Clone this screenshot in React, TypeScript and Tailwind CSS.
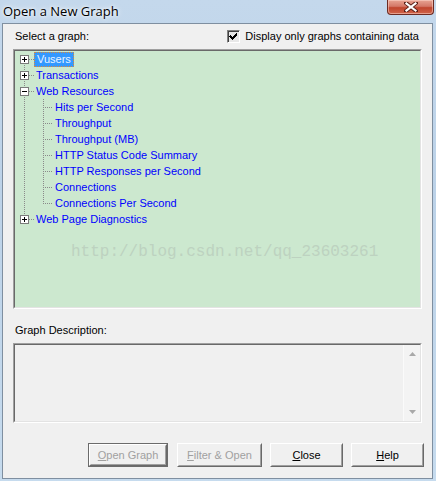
import React from "react";

type Row = { label: string; level: 0 | 1; box?: "plus" | "minus"; selected?: boolean };

const ROWS: Row[] = [
  { label: "Vusers", level: 0, box: "plus", selected: true },
  { label: "Transactions", level: 0, box: "plus" },
  { label: "Web Resources", level: 0, box: "minus" },
  { label: "Hits per Second", level: 1 },
  { label: "Throughput", level: 1 },
  { label: "Throughput (MB)", level: 1 },
  { label: "HTTP Status Code Summary", level: 1 },
  { label: "HTTP Responses per Second", level: 1 },
  { label: "Connections", level: 1 },
  { label: "Connections Per Second", level: 1 },
  { label: "Web Page Diagnostics", level: 0, box: "plus" },
];

const DOT = "#8a8a8a";

// connector lines + expander box for one tree row
function Branch({ row, first, last, lastChild }: { row: Row; first: boolean; last: boolean; lastChild: boolean }) {
  const w = row.level === 0 ? 19 : 38;
  return (
    <svg width={w} height={16} className="shrink-0" shapeRendering="crispEdges">
      {row.level === 0 ? (
        <>
          {!first && <line x1={9.5} y1={0} x2={9.5} y2={8} stroke={DOT} strokeDasharray="1 1" />}
          {!last && <line x1={9.5} y1={8} x2={9.5} y2={16} stroke={DOT} strokeDasharray="1 1" />}
          <line x1={14} y1={8.5} x2={19} y2={8.5} stroke={DOT} strokeDasharray="1 1" />
          <rect x={5.5} y={4.5} width={8} height={8} fill="#fff" stroke="#7a7a7a" />
          <line x1={7} y1={8.5} x2={12} y2={8.5} stroke="#000" />
          {row.box === "plus" && <line x1={9.5} y1={6} x2={9.5} y2={11} stroke="#000" />}
        </>
      ) : (
        <>
          <line x1={9.5} y1={0} x2={9.5} y2={16} stroke={DOT} strokeDasharray="1 1" />
          <line x1={28.5} y1={0} x2={28.5} y2={lastChild ? 9 : 16} stroke={DOT} strokeDasharray="1 1" />
          <line x1={30} y1={8.5} x2={38} y2={8.5} stroke={DOT} strokeDasharray="1 1" />
        </>
      )}
    </svg>
  );
}

function Button({ label, mn, rest, w, disabled, def }: { label?: string; mn: string; rest: string; w: string; disabled?: boolean; def?: boolean }) {
  return (
    <div
      className={`${w} h-[24px] ${def ? "border border-[#6b6b6b]" : ""}`}
    >
      <div className="h-full border border-t-white border-l-white border-r-[#696969] border-b-[#696969]">
        <div
          className={`flex h-full items-center justify-center border border-transparent border-r-[#a0a0a0] border-b-[#a0a0a0] text-[11px] ${
            disabled ? "text-[#a0a0a0]" : "text-black"
          }`}
        >
          <span className="underline underline-offset-[1px]">{mn}</span>
          <span>{rest}</span>
          {label}
        </div>
      </div>
    </div>
  );
}

export default function App() {
  const firstChild = ROWS.findIndex((r) => r.level === 1);
  let lastChildIdx = -1;
  ROWS.forEach((r, i) => {
    if (r.level === 1) lastChildIdx = i;
  });
  return (
    <div
      className="flex h-[481px] w-[436px] flex-col bg-[linear-gradient(180deg,#c4d8ec_0%,#bcd2e8_40%,#c6dbee_100%)]"
      style={{ fontFamily: '"Liberation Sans", Arial, sans-serif' }}
    >
      {/* title bar */}
      <div className="relative flex h-[23px] shrink-0 items-center">
        <span
          className="pl-[3px] text-[13px] text-black [text-shadow:0_0_6px_#ffffff,0_0_3px_#ffffff]"
          style={{ fontFamily: '"Open Sans", "Noto Sans", sans-serif' }}
        >
          Open a New Graph
        </span>
        <div className="absolute right-[2px] top-0 flex h-[15px] w-[47px] items-center justify-center rounded-b-[4px] border border-t-0 border-[#6d2b22] bg-[linear-gradient(180deg,#e8a493_0%,#d47868_45%,#c0452e_55%,#d0654a_100%)] shadow-[inset_0_0_0_1px_rgba(255,220,210,0.5)]">
          <svg width="14" height="10" viewBox="0 0 14 10">
            <path d="M2 1 L12 9 M12 1 L2 9" stroke="#5a2018" strokeWidth="4" strokeLinecap="square" />
            <path d="M2.5 1.5 L11.5 8.5 M11.5 1.5 L2.5 8.5" stroke="#ffffff" strokeWidth="2.2" strokeLinecap="square" />
          </svg>
        </div>
      </div>

      {/* client area */}
      <div className="mb-[2px] ml-[2px] mr-[3px] flex flex-1 flex-col border border-[#7f8fa0] bg-[#f0f0f0] text-[11px] text-black">
        <div className="flex h-[14px] items-center pl-[12px] pr-[13px] pt-0 mt-[5px]">
          <span>Select a graph:</span>
          <div className="ml-auto flex items-center">
            <div className="flex h-[13px] w-[13px] items-center justify-center border border-t-[#808080] border-l-[#808080] border-r-white border-b-white bg-[#e8e8e8] shadow-[inset_1px_1px_0_#404040]">
              <svg width="9" height="9" viewBox="0 0 9 9" shapeRendering="crispEdges">
                <path d="M1 3h1v1h1v1h1v-1h1v-1h1v-1h1v-1h1v3h-1v1h-1v1h-1v1h-1v1h-1v-1h-1v-1h-1v-1h-1z" fill="#000" />
              </svg>
            </div>
            <span className="ml-[5px]">Display only graphs containing data</span>
          </div>
        </div>

        {/* tree */}
        <div className="relative ml-[10px] mt-[6px] h-[260px] w-[409px] border border-t-[#a0a0a0] border-l-[#a0a0a0] border-r-white border-b-white">
          <div className="h-full border border-t-[#696969] border-l-[#696969] border-r-[#e3e3e3] border-b-[#e3e3e3] bg-[#cce8cf]">
            {ROWS.map((r, i) => (
              <div key={r.label} className="flex h-[16px] items-center">
                <Branch
                  row={r}
                  first={i === 0}
                  last={i === ROWS.length - 1}
                  lastChild={i === lastChildIdx && i >= firstChild}
                />
                <span
                  className={`flex h-[15px] items-center px-[2px] leading-none ${
                    r.selected
                      ? "border border-dotted border-[#d88a3c] bg-[#3399ff] px-[1px] text-[#eaf4ff]"
                      : "text-[#0000ff]"
                  }`}
                >
                  {r.label}
                </span>
              </div>
            ))}
          </div>
          <span
            className="pointer-events-none absolute left-[57px] top-[190px] text-[16px] text-[#bdd2c0]"
            style={{ fontFamily: '"Liberation Mono", monospace' }}
          >
            http://blog.csdn.net/qq_23603261
          </span>
        </div>

        <div className="mt-[14px] flex h-[14px] items-center pl-[12px]">Graph Description:</div>

        {/* description box */}
        <div className="ml-[10px] mt-[6px] h-[80px] w-[409px] border border-t-[#a0a0a0] border-l-[#a0a0a0] border-r-white border-b-white">
          <div className="flex h-full border border-t-[#696969] border-l-[#696969] border-r-[#e3e3e3] border-b-[#e3e3e3] bg-[#f0f0f0]">
            <div className="flex-1" />
            <div className="flex w-[17px] flex-col items-center justify-between border-l border-[#fafafa] bg-[#f3f3f3] py-[7px]">
              <svg width="7" height="4" viewBox="0 0 7 4">
                <path d="M0 4 L3.5 0 L7 4 Z" fill="#a8a8a8" />
              </svg>
              <svg width="7" height="4" viewBox="0 0 7 4">
                <path d="M0 0 L3.5 4 L7 0 Z" fill="#a8a8a8" />
              </svg>
            </div>
          </div>
        </div>

        {/* buttons */}
        <div className="mt-[20px] flex justify-end pr-[8px]">
          <Button mn="O" rest="pen Graph" w="w-[80px]" disabled def />
          <div className="ml-[9px]">
            <Button mn="F" rest="ilter & Open" w="w-[85px]" disabled />
          </div>
          <div className="ml-[8px]">
            <Button mn="C" rest="lose" w="w-[73px]" />
          </div>
          <div className="ml-[8px]">
            <Button mn="H" rest="elp" w="w-[73px]" />
          </div>
        </div>
      </div>
    </div>
  );
}
